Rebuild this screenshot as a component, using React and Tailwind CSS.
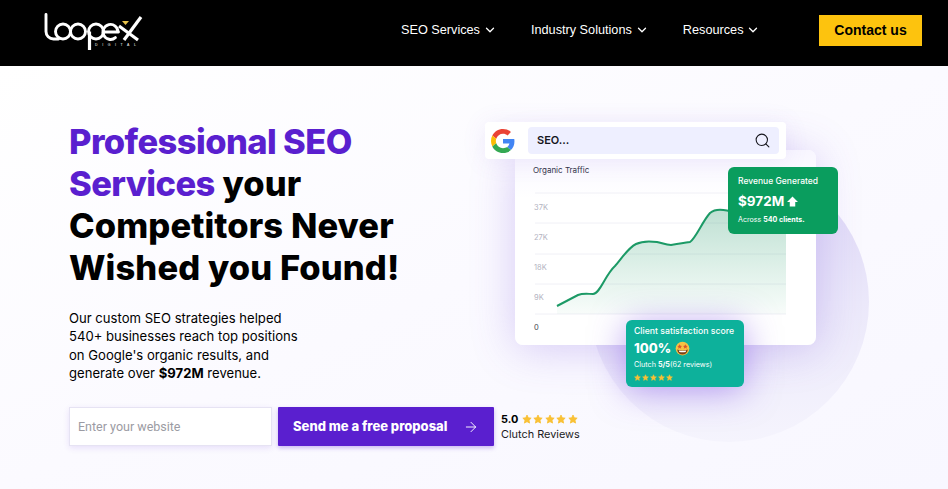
import React from "react";
import { ChevronDown, ArrowRight, Search } from "lucide-react";

const poppins = "font-['Inter','Liberation_Sans',sans-serif]";

function Star({ size = 9, color = "#f9c136" }) {
  return (
    <svg width={size} height={size} viewBox="0 0 24 24" fill={color} stroke={color} strokeWidth="2" strokeLinejoin="round">
      <path d="M12 2.500l3 6.500 7 .9-5.200 4.900 1.400 7-6.200-3.500-6.200 3.500 1.400-7L2 9.900l7-.9z" />
    </svg>
  );
}

function Logo() {
  return (
    <div className="relative w-[100px] h-[38px]">
      <svg width="100" height="38" viewBox="0 0 100 38" fill="none" stroke="#fff" strokeWidth="2.900" strokeLinecap="round">
        <path d="M2 1.500V18.500a7.500 7.500 0 0 0 7.500 7.500h5" />
        <circle cx="19" cy="18.500" r="7.500" />
        <circle cx="34" cy="18.500" r="7.500" />
        <circle cx="52" cy="18.500" r="7.500" />
        <path d="M45.500 18.500V37" strokeLinecap="butt" strokeWidth="3.200" />
        <path d="M60 19H74.500M74 19a7.500 7.500 0 1 0-2.600 5.600" />
        <path d="M97 4L80 27" strokeLinecap="butt" strokeWidth="3.200" />
        <path d="M75 13L94 27" strokeLinecap="butt" strokeWidth="3.200" />
        <path d="M78 8h7l-3.500 4z" fill="#e8c24a" stroke="none" />
      </svg>
      <span className="absolute left-[51px] top-[30px] text-[3.500px] tracking-[4.600px] text-white font-['Liberation_Sans',sans-serif]">DIGITAL</span>
    </div>
  );
}

function NavItem({ label }) {
  return (
    <div className="flex items-center gap-[3px] text-[12.700px] text-white font-['Liberation_Sans',sans-serif]">
      <span>{label}</span>
      <ChevronDown size={14} strokeWidth={2.200} />
    </div>
  );
}

function GoogleG() {
  return (
    <svg width="24" height="24" viewBox="0 0 48 48">
      <path fill="#EA4335" d="M24 9.500c3.500 0 6.700 1.300 9.100 3.400l6.800-6.800C35.800 2.400 30.300 0 24 0 14.600 0 6.500 5.400 2.600 13.200l7.900 6.200C12.400 13.600 17.700 9.500 24 9.500z" />
      <path fill="#4285F4" d="M46.900 24.500c0-1.600-.1-3.100-.4-4.500H24v9h12.900c-.6 3-2.200 5.500-4.700 7.200l7.700 6c4.500-4.200 7-10.300 7-17.700z" />
      <path fill="#FBBC05" d="M10.500 28.600c-.5-1.400-.8-3-.8-4.600s.3-3.200.8-4.600l-7.900-6.200C.9 16.500 0 20.100 0 24s.9 7.500 2.600 10.800l7.900-6.200z" />
      <path fill="#34A853" d="M24 48c6.500 0 11.900-2.100 15.900-5.800l-7.700-6c-2.200 1.400-4.900 2.300-8.200 2.300-6.300 0-11.600-4.200-13.500-9.900l-7.900 6.200C6.500 42.600 14.600 48 24 48z" />
    </svg>
  );
}

function Emoji() {
  return (
    <svg width="15" height="15" viewBox="0 0 24 24">
      <circle cx="12" cy="12" r="11" fill="#f6c143" />
      <path d="M3.500 13.500c5 2 12 2 17 0-.5 5-4 8-8.500 8s-8-3-8.500-8z" fill="#7a3f16" />
      <path d="M6 15c4 1 8 1 12 0l-1 2.500c-3 .8-7 .8-10 0z" fill="#fff" />
      <path d="M7.500 5l1.200 2.500 2.600.3-2 1.800.6 2.600-2.400-1.400-2.400 1.400.6-2.600-2-1.800 2.600-.3zM16.500 5l1.200 2.500 2.600.3-2 1.800.6 2.600-2.400-1.400-2.400 1.400.6-2.600-2-1.800 2.600-.3z" fill="#d9552b" />
    </svg>
  );
}

function Chart() {
  const line = "M557 306 L578 295 C583 293 588 294 593 294 C600 294 605 275 615 266 C622 258 628 248 636 244 C642 241 650 241 657 242 C662 243 666 245 671 245 C677 244 683 243 690 242 C696 238 702 222 710 213 C716 208 724 209 735 213 L786 217";
  const area = line + " L786 314 L557 314 Z";
  return (
    <svg className="absolute left-0 top-0" width="948" height="489" viewBox="0 0 948 489" fill="none">
      <defs>
        <linearGradient id="ar" x1="0" y1="0" x2="0" y2="1">
          <stop offset="0" stopColor="#1a8f62" stopOpacity="0.28" />
          <stop offset="1" stopColor="#1a9f62" stopOpacity="0.03" />
        </linearGradient>
      </defs>
      {[193, 223, 254, 284, 314].map((y) => (
        <path key={y} d={`M535 ${y}H786`} stroke="#f0f0f6" strokeWidth="1" />
      ))}
      <path d={area} fill="url(#ar)" />
      <path d={line} stroke="#1c9a66" strokeWidth="2" strokeLinejoin="round" />
    </svg>
  );
}

export default function App() {
  return (
    <div className={`relative w-[948px] h-[489px] overflow-hidden bg-[#fbfaff] ${poppins}`}>
      <header className="flex items-center h-[66px] bg-black pl-[44px] pr-[26px] pb-[5px]">
        <div className="mt-[3px]"><Logo /></div>
        <nav className="flex items-center gap-[34px] ml-[257px]">
          <NavItem label="SEO Services" />
          <NavItem label="Industry Solutions" />
          <NavItem label="Resources" />
        </nav>
        <button className="ml-auto w-[103px] h-[31px] bg-[#fdc30e] text-black text-[14px] font-bold font-['Liberation_Sans',sans-serif]">Contact us</button>
      </header>

      <main className="relative h-[423px] bg-gradient-to-br from-white via-[#fbfaff] to-[#f8f7ff]">
        <section className="absolute left-0 top-0 pl-[69px] pt-[55px] w-[620px]">
          <h1 className="text-[34.500px] leading-[42px] font-extrabold text-black tracking-[0.100px] whitespace-nowrap">
            <span className="text-[#5a1fcf] tracking-[-0.600px]">Professional SEO</span><br />
            <span className="text-[#5a1fcf] tracking-[-0.600px]">Services</span> your<br />
            Competitors Never<br />
            Wished you Found!
          </h1>
          <p className="mt-[20px] text-[13.100px] leading-[18.300px] text-black">
            Our custom SEO strategies helped<br />
            540+ businesses reach top positions<br />
            on Google's organic results, and<br />
            generate over <b>$972M</b> revenue.
          </p>
          <div className="mt-[25px] flex items-center">
            <div className="w-[203px] h-[39px] bg-white border border-[#e6e3f3] shadow-[0_2px_6px_rgba(90,31,207,0.12)] flex items-center pl-[8px] pt-[2px] text-[12.500px] text-[#9b9ba3] font-['Roboto',sans-serif]">Enter your website</div>
            <button className="ml-[6px] w-[216px] h-[39px] shrink-0 bg-[#5a1fcf] rounded-[1px] text-white flex items-center pl-[15px] pr-[15px] justify-between text-[13px] font-extrabold whitespace-nowrap shadow-[0_2px_4px_rgba(90,31,207,0.3)]">
              <span>Send me a free proposal</span>
              <ArrowRight size={16} strokeWidth={1.400} />
            </button>
            <div className="ml-[7px] text-[10.900px] text-[#1c1c24] leading-[15px]">
              <div className="flex items-center gap-[1.500px]">
                <b className="mr-[2px] text-black">5.0</b>
                <Star size={10} /><Star size={10} /><Star size={10} /><Star size={10} /><Star size={10} />
              </div>
              <div className="mt-[0px] whitespace-nowrap">Clutch Reviews</div>
            </div>
          </div>
        </section>
      </main>

      <div className="absolute left-[589px] top-[162px] w-[280px] h-[280px] rounded-full bg-gradient-to-b from-[#dcd5f6] via-[#ebe8fa] to-[#f5f4fd]" />
      <div className="absolute left-[515px] top-[150px] w-[301px] h-[195px] bg-gradient-to-b from-[#f8f6ff] to-white to-[25%] rounded-[8px] shadow-[0_4px_44px_rgba(120,80,220,0.28)]" />
      <Chart />
      <div className="absolute left-[485px] top-[122px] w-[301px] h-[37px] bg-white rounded-[4px] flex items-center pl-[6px] pr-[7px] shadow-[0_2px_24px_rgba(120,80,220,0.10)]">
        <GoogleG />
        <div className="ml-[13px] flex-1 h-[27px] bg-[#eeefff] rounded-[4px] flex items-center justify-between pl-[9px] pr-[8px]">
          <span className="text-[11px] font-semibold text-[#16161e]">SEO...</span>
          <Search size={17} strokeWidth={1.500} color="#15151c" />
        </div>
      </div>
      <div className="absolute left-[533px] top-[164px] text-[8px] text-[#33334a]">Organic Traffic</div>
      {[["37K",202],["27K",232],["18K",262],["9K",292]].map(([t,y]) => (
        <div key={t} className="absolute left-[534px] text-[7.500px] text-[#b3b3bf]" style={{ top: y }}>{t}</div>
      ))}
      <div className="absolute left-[534px] top-[322px] text-[7.500px] text-[#45454f]">0</div>

      <div className="absolute left-[728px] top-[167px] w-[110px] h-[67px] bg-[#0a9d5e] rounded-[6px] text-white pl-[10px] pt-[9px]">
        <div className="text-[8.500px] leading-[10px] font-medium whitespace-nowrap">Revenue Generated</div>
        <div className="mt-[7px] flex items-center gap-[3px] text-[13.500px] leading-[16px] font-bold">
          $972M
          <svg width="11" height="11" viewBox="0 0 10 10" fill="#fff"><path d="M5 .5L10 5.500H7.500V9.500H2.500V5.500H0z" /></svg>
        </div>
        <div className="mt-[6px] text-[7.100px] leading-[9px] whitespace-nowrap">Across <b>540 clients.</b></div>
      </div>

      <div className="absolute left-[626px] top-[320px] w-[118px] h-[67px] bg-[#0db19b] rounded-[6px] text-white pl-[8px] pt-[6px] shadow-[0_4px_34px_rgba(120,70,230,0.5)]">
        <div className="text-[8.700px] leading-[10px] font-medium whitespace-nowrap">Client satisfaction score</div>
        <div className="mt-[4px] flex items-center gap-[4px] text-[13px] leading-[17px] font-extrabold">100% <Emoji /></div>
        <div className="mt-[3px] text-[7.200px] leading-[9px] whitespace-nowrap">Clutch <b>5/5</b>(62 reviews)</div>
        <div className="mt-[5px] flex gap-[1px]"><Star size={7} /><Star size={7} /><Star size={7} /><Star size={7} /><Star size={7} /></div>
      </div>
    </div>
  );
}
